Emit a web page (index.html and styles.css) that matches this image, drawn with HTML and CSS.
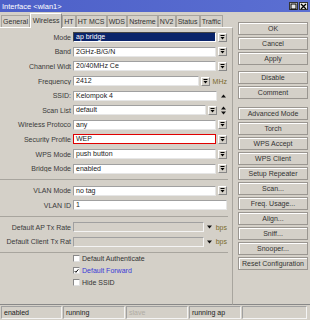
FILE: index.html
```html
<html>
<head>
    <title>Interface &lt;wlan1&gt;</title>
    <link rel="stylesheet" href="styles.css">
</head>
<body>
<div class="window">
    <div class="titlebar">
        <span>Interface &lt;wlan1&gt;</span>
        <span class="tb-btns">
            <span class="tb-btn"><svg width="7" height="7" viewBox="0 0 7 7"><rect x="1" y="1" width="5" height="5" fill="none" stroke="#000" stroke-width="1"/></svg></span>
            <span class="tb-btn"><svg width="7" height="7" viewBox="0 0 7 7"><path d="M1 1L6 6M6 1L1 6" stroke="#000" stroke-width="1.3"/></svg></span>
        </span>
    </div>
    <div class="main">
        <div class="left">
            <div class="tabs">
                <div class="tab">General</div>
                <div class="tab active">Wireless</div>
                <div class="tab">HT</div>
                <div class="tab">HT MCS</div>
                <div class="tab">WDS</div>
                <div class="tab">Nstreme</div>
                <div class="tab">NV2</div>
                <div class="tab">Status</div>
                <div class="tab">Traffic</div>
            </div>
            <div class="panel">
                <div class="row">
                    <div class="label">Mode</div>
                    <div class="ctl"><div class="field selected">ap bridge</div><span class="drop"></span></div>
                </div>
                <div class="row">
                    <div class="label">Band</div>
                    <div class="ctl"><div class="field">2GHz-B/G/N</div><span class="drop"></span></div>
                </div>
                <div class="row">
                    <div class="label">Channel Widt</div>
                    <div class="ctl"><div class="field">20/40MHz Ce</div><span class="drop"></span></div>
                </div>
                <div class="row">
                    <div class="label">Frequency</div>
                    <div class="ctl"><div class="field">2412</div><span class="drop"></span><span class="unit">MHz</span></div>
                </div>
                <div class="row">
                    <div class="label">SSID:</div>
                    <div class="ctl"><div class="field">Kelompok 4</div>
                        <svg class="mark" width="7" height="6" viewBox="0 0 7 6"><path d="M1 4.5H6L3.5 1.5Z" fill="#111"/></svg>
                    </div>
                </div>
                <div class="row">
                    <div class="label">Scan List</div>
                    <div class="ctl"><div class="field">default</div><span class="drop"></span>
                        <svg class="mark" width="7" height="9" viewBox="0 0 7 9"><path d="M1 3.5H6L3.5 0.5Z M1 5.5H6L3.5 8.5Z" fill="#111"/></svg>
                    </div>
                </div>
                <div class="row">
                    <div class="label">Wireless Protoco</div>
                    <div class="ctl"><div class="field">any</div><span class="drop"></span></div>
                </div>
                <div class="row">
                    <div class="label">Security Profile</div>
                    <div class="ctl"><div class="field error">WEP</div><span class="drop"></span></div>
                </div>
                <div class="row">
                    <div class="label">WPS Mode</div>
                    <div class="ctl"><div class="field">push button</div><span class="drop"></span></div>
                </div>
                <div class="row">
                    <div class="label">Bridge Mode</div>
                    <div class="ctl"><div class="field">enabled</div><span class="drop"></span></div>
                </div>
                <div class="sep"></div>
                <div class="row">
                    <div class="label">VLAN Mode</div>
                    <div class="ctl"><div class="field">no tag</div><span class="drop"></span></div>
                </div>
                <div class="row">
                    <div class="label">VLAN ID</div>
                    <div class="ctl"><div class="field">1</div></div>
                </div>
                <div class="sep"></div>
                <div class="row">
                    <div class="label">Default AP Tx Rate</div>
                    <div class="ctl"><div class="field disabled short"></div>
                        <svg class="mark down" width="7" height="6" viewBox="0 0 7 6"><path d="M1 1.5H6L3.5 4.5Z" fill="#111"/></svg>
                        <span class="unit">bps</span></div>
                </div>
                <div class="row">
                    <div class="label">Default Client Tx Rat</div>
                    <div class="ctl"><div class="field disabled short"></div>
                        <svg class="mark down" width="7" height="6" viewBox="0 0 7 6"><path d="M1 1.5H6L3.5 4.5Z" fill="#111"/></svg>
                        <span class="unit">bps</span></div>
                </div>
                <div class="sep last"></div>
                <div class="checks">
                    <div class="check"><span class="box"></span>Default Authenticate</div>
                    <div class="check blue"><span class="box"><svg width="6" height="6" viewBox="0 0 6 6"><path d="M0.8 3L2.3 4.6L5.2 1" fill="none" stroke="#000" stroke-width="1.2"/></svg></span>Default Forward</div>
                    <div class="check"><span class="box"></span>Hide SSID</div>
                </div>
            </div>
        </div>
        <div class="buttons">
            <div class="btn">OK</div>
            <div class="btn">Cancel</div>
            <div class="btn">Apply</div>
            <div class="btn group">Disable</div>
            <div class="btn">Comment</div>
            <div class="btn group2">Advanced Mode</div>
            <div class="btn">Torch</div>
            <div class="btn">WPS Accept</div>
            <div class="btn">WPS Client</div>
            <div class="btn">Setup Repeater</div>
            <div class="btn">Scan...</div>
            <div class="btn">Freq. Usage...</div>
            <div class="btn">Align...</div>
            <div class="btn">Sniff...</div>
            <div class="btn">Snooper...</div>
            <div class="btn">Reset Configuration</div>
        </div>
    </div>
    <div class="status">
        <div class="cell c1">enabled</div>
        <div class="cell c2">running</div>
        <div class="cell c3 grey">slave</div>
        <div class="cell c4">running ap</div>
        <div class="cell c5"></div>
    </div>
</div>
</body>
</html>
```

FILE: styles.css
```css
body {
    margin: 0;
    background-color: #d4d0c8;
    font-family: "Liberation Sans", Arial, sans-serif;
    font-size: 7px;
    color: #333;
}
.window {
    width: 310px;
    height: 320px;
    display: flex;
    flex-direction: column;
}
.titlebar {
    height: 12px;
    display: flex;
    justify-content: space-between;
    align-items: center;
    padding: 0 2px 0 2px;
    background: linear-gradient(to right, #4d60c8, #5b6fd2);
    color: #fff;
    font-size: 7.5px;
}
.tb-btns {
    display: flex;
    gap: 1px;
}
.tb-btn {
    width: 9px;
    height: 8px;
    background-color: #e8e8e8;
    border: 1px solid #333;
    box-sizing: border-box;
    display: flex;
    align-items: center;
    justify-content: center;
}
.main {
    display: flex;
    height: 293px;
}
.left {
    width: 233px;
    display: flex;
    flex-direction: column;
}
.tabs {
    height: 15px;
    display: flex;
    align-items: flex-end;
    padding-left: 1px;
}
.tab {
    height: 12px;
    line-height: 11px;
    padding: 0 1.1px;
    border: 1px solid #a8a59e;
    border-bottom: none;
    box-sizing: border-box;
    white-space: nowrap;
    background-color: #d4d0c8;
}
.tab.active {
    height: 15px;
    line-height: 14px;
    padding: 0 1.6px;
    border-color: #fff #888 #888 #fff;
    margin-bottom: -1px;
    position: relative;
    z-index: 1;
}
.panel {
    flex: 1;
    border-top: 1px solid #fff;
    border-right: 1px solid #a8a59e;
    border-bottom: 1px solid #888;
    padding-top: 2px;
}
.row {
    height: 14.6px;
    display: flex;
    align-items: center;
}
.label {
    width: 71px;
    padding-right: 2px;
    text-align: right;
    white-space: nowrap;
    overflow: hidden;
    color: #3a3a3a;
}
.ctl {
    width: 154px;
    display: flex;
    align-items: center;
}
.field {
    flex: 1;
    height: 10px;
    line-height: 8px;
    padding-left: 2px;
    box-sizing: border-box;
    background-color: #fff;
    border: 1px solid;
    border-color: #a0a0a0 #e6e6e6 #e6e6e6 #a0a0a0;
    color: #222;
    white-space: nowrap;
    overflow: hidden;
}
.field.selected {
    background-color: #0a246a;
    color: #fff;
    border-color: #444 #fff #fff #444;
}
.field.error {
    border: 1px solid #e00000;
}
.field.disabled {
    background-color: #d4d0c8;
    border-color: #a0a0a0 #f4f4f4 #f4f4f4 #a0a0a0;
}
.drop {
    width: 9px;
    height: 9px;
    margin-left: 2px;
    box-sizing: border-box;
    border: 1px solid;
    border-color: #fff #888 #888 #fff;
    background-color: #d4d0c8;
    background-image: url("data:image/svg+xml,%3Csvg xmlns='http://www.w3.org/2000/svg' width='7' height='7'%3E%3Cpath d='M1.5 1.5H5.5' stroke='%23000' stroke-width='1'/%3E%3Cpath d='M1.5 3H5.5L3.5 5.5Z' fill='%23000'/%3E%3C/svg%3E");
    background-repeat: no-repeat;
    background-position: center;
}
.unit {
    margin-left: 3px;
    color: #7a6a2a;
}
.mark {
    margin-left: 3px;
}
.mark.down {
    margin-left: 2px;
}
.sep {
    height: 7.4px;
    margin-right: 4px;
    background: linear-gradient(#a8a59e, #a8a59e) no-repeat 0 3px / 100% 1px;
}
.sep.last {
    height: 5px;
}
.checks {
    display: flex;
    flex-direction: column;
    gap: 4.5px;
    padding-left: 73px;
    padding-top: 1px;
}
.check {
    display: flex;
    align-items: center;
    height: 7.5px;
    white-space: nowrap;
}
.check.blue {
    color: #3b3bd6;
}
.box {
    width: 7px;
    height: 7px;
    box-sizing: border-box;
    background-color: #fff;
    border: 1px solid;
    border-color: #888 #e0e0e0 #e0e0e0 #888;
    margin-right: 2px;
    display: flex;
    align-items: center;
    justify-content: center;
}
.buttons {
    width: 77px;
    padding: 10px 2px 0 5px;
    box-sizing: border-box;
    display: flex;
    flex-direction: column;
    gap: 2px;
    border-bottom: 1px solid #888;
}
.btn {
    height: 13px;
    line-height: 11px;
    text-align: center;
    box-sizing: border-box;
    border: 1px solid #9a9690;
    box-shadow: inset 1px 1px 0 #fff;
    white-space: nowrap;
    color: #333;
}
.btn.group {
    margin-top: 4px;
}
.btn.group2 {
    margin-top: 6px;
}
.status {
    display: flex;
    gap: 1px;
    padding: 1px 3px 0 1px;
}
.cell {
    height: 13px;
    line-height: 11px;
    padding-left: 2px;
    box-sizing: border-box;
    border: 1px solid;
    border-color: #a0a0a0 #f4f4f4 #f4f4f4 #a0a0a0;
    color: #222;
}
.c1 { width: 61px; }
.c2 { width: 62px; }
.c3 { width: 62px; }
.c4 { width: 52px; }
.c5 { width: 65px; }
.grey {
    color: #b0aca4;
}
```
